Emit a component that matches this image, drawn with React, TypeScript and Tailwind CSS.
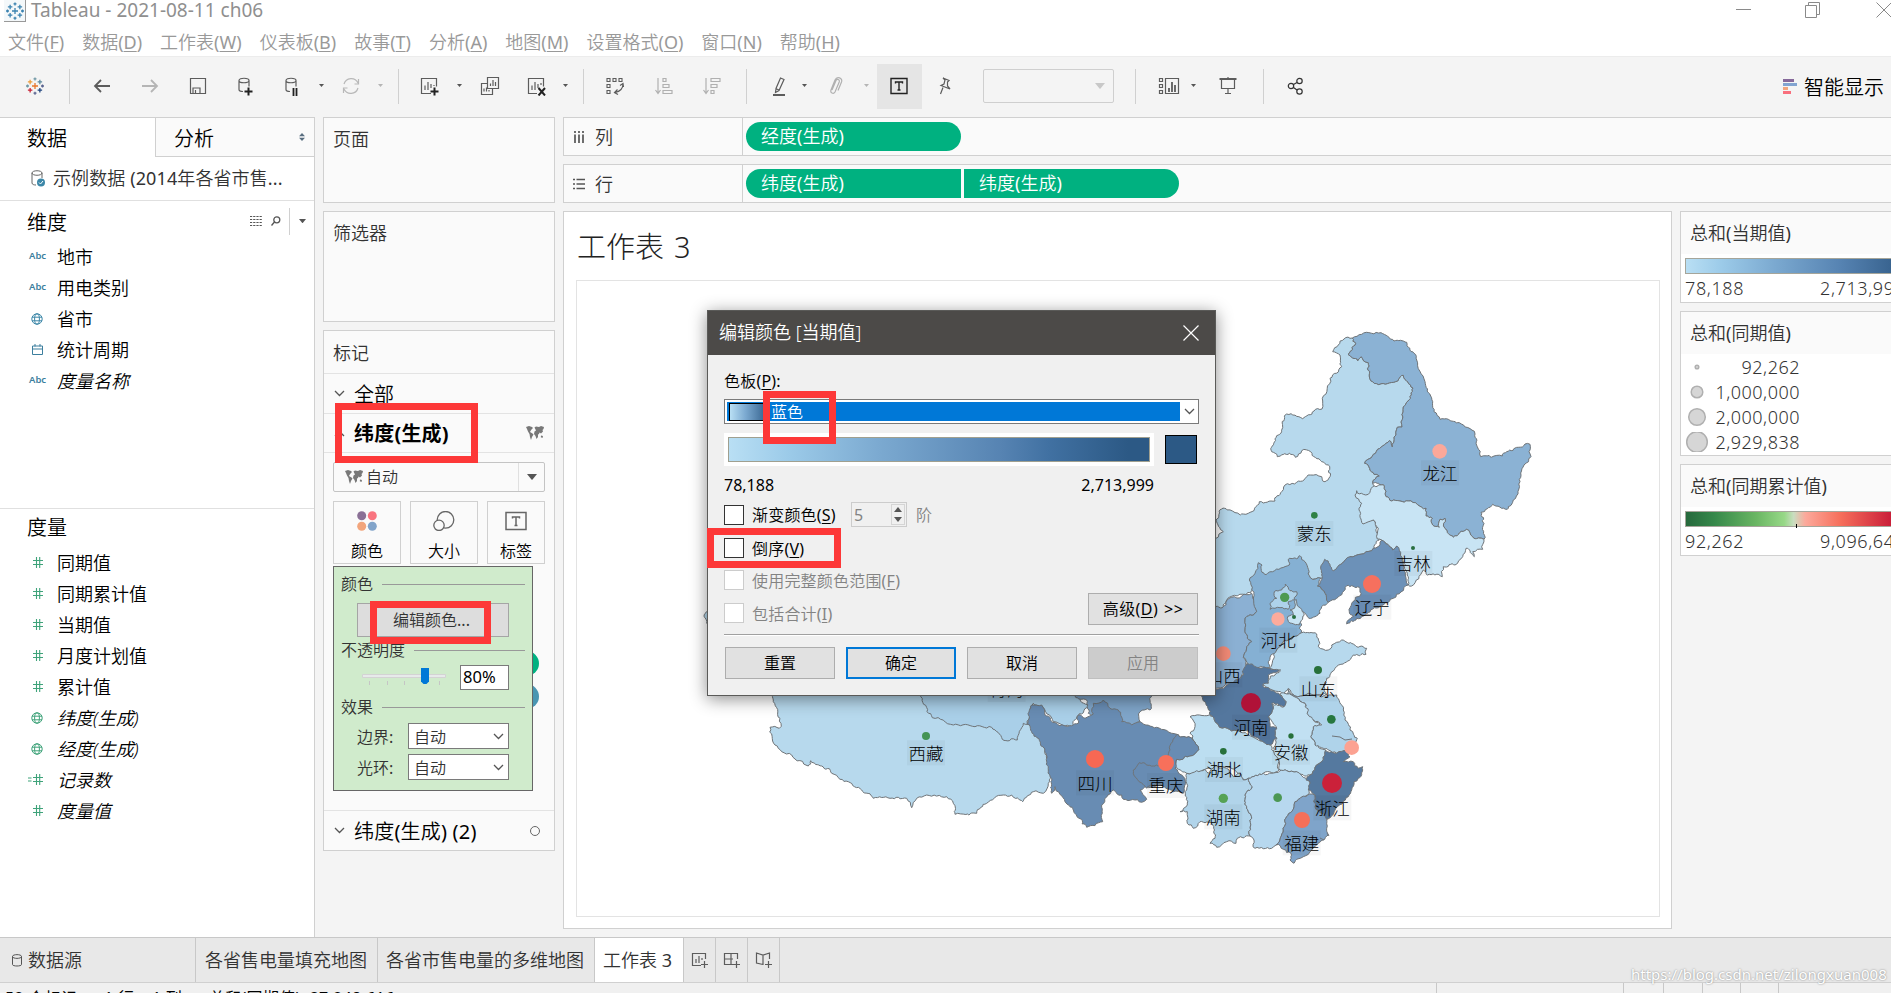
import React from "react";

type Pt = [number, number];
type Frame = "n" | "e" | "w";

const origin: Record<Frame, Pt> = { n: [1190, 310], e: [1180, 560], w: [740, 640] };

function parse(frame: Frame, s: string): Pt[] {
  const [ox, oy] = origin[frame];
  return s
    .trim()
    .split(/\s+/)
    .map((p) => {
      const [x, y] = p.split(",").map(Number);
      return [ox + x / 3, oy + y / 3] as Pt;
    });
}

function noise(x: number, y: number) {
  const v = Math.sin(x * 12.9898 + y * 78.233) * 43758.5453;
  return v - Math.floor(v) - 0.5;
}

// Splits a border segment at a displaced midpoint; the order of the ends does not matter.
function rough(a: Pt, b: Pt): Pt[] {
  const dx = b[0] - a[0];
  const dy = b[1] - a[1];
  const len = Math.hypot(dx, dy);
  if (len < 3 || len > 60) return [b];
  const mx = (a[0] + b[0]) / 2;
  const my = (a[1] + b[1]) / 2;
  const sign = a[0] + a[1] * 0.37 < b[0] + b[1] * 0.37 ? 1 : -1;
  const k = noise(Math.round(mx * 3), Math.round(my * 3)) * sign * Math.min(0.5, 3 / len);
  const m: Pt = [mx - dy * k, my + dx * k];
  return [...rough(a, m), ...rough(m, b)];
}

function outline(frame: Frame, s: string) {
  const pts = parse(frame, s);
  const out: Pt[] = [pts[0]];
  pts.forEach((p, i) => out.push(...rough(p, pts[(i + 1) % pts.length])));
  return "M" + out.map((p) => p[0].toFixed(1) + " " + p[1].toFixed(1)).join("L") + "Z";
}

const regions: { f: Frame; c: string; p: string }[] = [
  { f: "n", c: "#b7d9ed", p: "428,125 445,105 462,87 487,84 497,100 474,133 503,152 514,140 521,153 535,158 538,195 548,215 573,221 623,213 631,200 640,196 669,234 654,273 640,291 636,351 622,352 607,411 598,392 524,460 552,493 568,498 548,520 560,560 540,600 548,630 560,655 568,690 545,722 480,740 430,790 404,800 393,805 361,803 340,760 330,760 298,785 248,790 216,800 190,830 182,848 118,862 98,895 40,895 40,700 78,685 100,665 78,630 95,597 160,612 175,610 208,575 255,573 275,545 292,521 320,517 361,495 395,500 405,515 420,500 415,465 395,455 362,425 335,422 316,442 298,430 262,440 245,425 247,408 265,375 290,312 338,326 372,303 396,297 397,265 420,205 455,170 450,135" },
  { f: "n", c: "#8bb2d4", p: "487,84 515,73 573,68 612,93 650,97 672,130 680,150 705,215 722,258 732,305 750,328 775,328 808,338 855,372 862,410 872,440 937,438 950,425 985,412 1005,402 1020,403 1017,425 1023,440 1002,465 990,515 970,570 952,598 908,583 873,607 882,640 882,688 848,680 830,658 790,682 765,655 765,625 750,628 748,652 728,645 727,625 708,618 708,595 655,573 605,573 588,560 583,527 548,520 568,498 552,493 524,460 598,392 607,411 622,352 636,351 640,291 654,273 669,234 640,196 631,200 623,213 573,221 548,215 538,195 535,158 521,153 514,140 503,152 474,133 497,100" },
  { f: "n", c: "#c8e4f4", p: "583,527 588,560 605,573 655,573 708,595 708,618 727,625 728,645 748,652 750,628 765,625 765,655 790,682 830,658 848,680 882,688 878,718 848,725 853,740 828,715 818,740 795,765 760,770 757,800 712,795 700,780 665,828 655,825 650,785 620,708 608,720 575,690 562,687 565,655 550,630 519,642 507,600 515,580 495,555 500,542 520,553 535,553 548,530" },
  { f: "n", c: "#6c91b8", p: "575,690 608,720 620,708 640,765 655,825 610,865 580,885 500,925 470,942 475,930 490,920 478,905 485,880 513,850 508,832 470,827 440,865 415,877 405,850 382,828 397,800 397,762 404,748 430,782 480,740 545,722 570,705" },
  { f: "e", c: "#8bb0d3", p: "60,147 130,140 155,112 215,100 230,155 195,180 195,210 215,245 190,292 200,320 180,360 60,400" },
  { f: "e", c: "#85b0d3", p: "235,8 246,15 246,37 278,35 328,15 328,-5 360,-13 375,5 391,53 423,55 412,78 435,100 445,127 425,140 420,160 405,170 387,175 370,155 360,180 365,195 358,205 365,218 325,240 296,262 265,305 268,323 200,315 190,292 215,245 195,210 195,180 230,155 215,90 208,60 225,40" },
  { f: "e", c: "#aed2ea", p: "270,130 290,115 283,95 305,90 316,72 330,92 350,95 343,120 325,125 325,148 300,143 270,148" },
  { f: "e", c: "#c8e4f4", p: "348,118 355,140 372,160 358,195 335,190 322,175 340,165 330,150 345,140" },
  { f: "e", c: "#b7d9ed", p: "296,262 325,240 365,218 410,222 415,260 445,270 455,255 485,240 520,252 560,265 558,283 520,285 490,312 465,325 440,355 430,378 440,405 410,405 345,408 325,385 310,405 248,375 300,328 268,325" },
  { f: "e", c: "#afd3ea", p: "410,405 470,405 490,450 495,480 510,510 532,535 530,570 495,575 470,580 445,570 405,555 392,530 400,500 425,495 400,480 380,455 375,430 320,402 325,388 345,408" },
  { f: "e", c: "#c1e0f2", p: "300,403 320,402 375,430 385,465 400,480 420,492 400,500 392,530 405,555 437,570 430,600 405,622 390,645 350,635 320,632 300,630 295,595 280,580 290,535 290,505 265,470 280,445 275,432 312,440 318,425" },
  { f: "e", c: "#bcdef1", p: "30,470 88,465 115,495 170,512 235,540 275,560 290,590 298,630 250,640 205,655 190,660 180,640 140,620 100,625 75,628 50,640 20,640 -30,620 -20,590 55,570 40,540 30,520 45,500" },
  { f: "e", c: "#54779e", p: "200,312 268,325 297,330 265,345 265,370 248,375 280,392 300,405 318,425 312,440 298,435 275,430 280,445 265,470 270,500 290,505 290,535 270,555 235,535 210,520 170,512 115,495 90,465 75,425 65,408 110,388 160,368 190,345" },
  { f: "e", c: "#b1d4ea", p: "20,640 50,632 75,628 85,640 105,618 140,625 160,650 180,640 190,660 205,655 217,680 195,705 200,740 215,775 210,828 172,835 168,850 140,845 110,862 90,850 105,835 98,795 60,785 40,805 22,790 22,755 0,755 22,735 20,690" },
  { f: "e", c: "#b7d8ef", p: "205,655 250,640 300,632 320,632 350,635 378,655 390,665 388,700 345,725 335,755 320,770 310,810 288,855 275,865 225,865 222,840 210,828 215,775 200,740 195,705 217,680" },
  { f: "e", c: "#55799f", p: "437,570 470,580 500,572 510,590 490,605 520,605 535,625 548,620 535,655 522,665 515,690 505,710 465,750 440,778 425,760 405,740 405,705 385,690 390,665 378,660 390,645 405,622 430,600" },
  { f: "e", c: "#7fa4ca", p: "388,702 405,705 405,740 425,760 440,778 440,805 445,825 410,855 395,870 370,890 342,910 330,900 333,880 288,855 310,810 320,770 335,755 345,725" },
  { f: "w", c: "#b7d9ed", p: "130,120 100,165 100,185 120,235 118,265 90,262 105,315 125,335 155,345 205,378 212,362 245,378 275,400 300,418 325,425 365,450 400,475 450,475 500,475 515,503 530,475 560,465 620,470 640,490 645,523 710,520 740,490 790,465 815,465 848,485 880,455 910,460 925,430 935,390 908,320 905,290 862,253 880,190 540,100" },
  { f: "w", c: "#a9cfe8", p: "530,150 577,233 640,255 755,262 787,298 832,300 850,250 862,253 880,190 900,200 940,245 995,262 1010,230 1045,200 1010,170 1010,100 540,100" },
  { f: "w", c: "#7fa5c9", p: "1005,168 1040,180 1045,220 1095,255 1150,265 1200,245 1200,215 1230,210 1235,165 1235,100 1005,100" },
  { f: "w", c: "#688cb3", p: "862,253 868,230 875,195 905,195 915,225 950,250 995,257 1015,250 1015,225 1035,235 1060,222 1060,190 1090,180 1110,205 1135,210 1145,245 1175,255 1200,245 1250,262 1310,283 1345,290 1375,320 1370,335 1310,358 1300,420 1220,440 1200,450 1220,478 1205,487 1150,478 1145,465 1120,450 1085,495 1088,545 1040,562 1000,510 975,485 945,440 935,460 925,390 908,320" },
  { f: "w", c: "#688cb3", p: "1310,283 1345,290 1375,320 1370,335 1310,358 1305,385 1325,405 1337,430 1330,460 1300,455 1255,430 1220,445 1180,400 1198,368 1240,378 1275,370 1290,330" },
  { f: "w", c: "#b7d9ed", p: "-95,-88 -104,-80 -108,-70 -102,-62 -100,-50 -90,-50" },
];

const labels: [Frame, number, number, string][] = [
  ["n", 750, 490, "龙江"], ["n", 373, 672, "蒙东"], ["n", 670, 762, "吉林"], ["n", 547, 893, "辽宁"],
  ["e", 295, 242, "河北"], ["e", 130, 346, "山西"], ["e", 415, 388, "山东"], ["e", 213, 503, "河南"],
  ["e", 333, 578, "安徽"], ["e", 132, 630, "湖北"], ["e", 130, 772, "湖南"], ["e", 457, 745, "浙江"],
  ["e", 365, 850, "福建"], ["w", 558, 340, "西藏"], ["w", 1065, 430, "四川"], ["w", 1278, 438, "重庆"],
  ["w", 800, 150, "青海"],
];

const dots: [Frame, number, number, number, string][] = [
  ["n", 749, 424, 22, "#fba89a"], ["n", 373, 616, 10, "#2f8246"], ["n", 669, 714, 6, "#2a6f40"], ["n", 546, 822, 27, "#f6705e"],
  ["e", 314, 112, 14, "#4e9a51"], ["e", 294, 177, 20, "#fcab9c"], ["e", 342, 171, 6, "#2a6f40"], ["e", 130, 281, 22, "#f28a76"],
  ["e", 414, 330, 12, "#27703a"], ["e", 213, 429, 30, "#b01238"], ["e", 454, 478, 13, "#27773f"], ["e", 333, 528, 8, "#27703a"],
  ["e", 130, 574, 10, "#27703a"], ["e", 130, 715, 14, "#56a254"], ["e", 293, 713, 13, "#4c9753"], ["e", 515, 563, 22, "#fca292"],
  ["e", 456, 669, 30, "#cb213a"], ["e", 366, 780, 24, "#f6705a"], ["w", 558, 288, 12, "#449455"], ["w", 1065, 357, 27, "#f76853"],
  ["w", 1278, 369, 24, "#f7705b"],
];

function ChinaMap() {
  return (
    <svg className="block h-full w-full" viewBox="577 281 1082 635">
      {regions.map((r, i) => (
        <path key={i} d={outline(r.f, r.p)} fill={r.c} stroke="#6f7478" strokeWidth="1" strokeLinejoin="round" />
      ))}
      <path d="M1332 736L1340 737L1345 740L1352 739M1327 833l2 3M1320 838l4 2" fill="none" stroke="#6f7478" />
      {labels.map(([f, x, y], i) => (
        <rect key={i} x={origin[f][0] + x / 3 - 19} y={origin[f][1] + y / 3 - 13} width="38" height="25" fill="#000" opacity="0.035" />
      ))}
      {dots.map(([f, x, y, r, c], i) => (
        <circle key={i} cx={origin[f][0] + x / 3} cy={origin[f][1] + y / 3} r={r / 3} fill={c} />
      ))}
      {labels.map(([f, x, y, t], i) => (
        <text key={i} x={origin[f][0] + x / 3} y={origin[f][1] + y / 3 + 6.3} fontSize="17.5" textAnchor="middle" fill="#000" className="font-light">
          {t}
        </text>
      ))}
    </svg>
  );
}

const LogoMark = ({ mono, className }: { mono?: boolean; className: string }) => {
  const crosses: [number, number, number, string][] = [
    [12, 12, 4, "#e8762b"], [5.5, 6.5, 3, "#eb9d3c"], [18.5, 6.5, 3, "#5b879b"], [5.5, 17.5, 3, "#c72035"], [18.5, 17.5, 3, "#1f447e"],
    [12, 2.5, 2, "#7199a6"], [12, 21.5, 2, "#5b6591"], [2, 12, 2, "#7199a6"], [22, 12, 2, "#5b6591"],
  ];
  return (
    <svg viewBox="0 0 24 24" className={className} fill="none" strokeWidth="1.7">
      {crosses.map(([x, y, r, c], i) => (
        <path key={i} d={`M${x - r} ${y}h${2 * r}M${x} ${y - r}v${2 * r}`} stroke={mono ? "#3a82b0" : c} />
      ))}
    </svg>
  );
};

const Caret = ({ c = "#555", w = 5 }: { c?: string; w?: number }) => (
  <svg width={w} height={w * 0.62} viewBox="0 0 10 6" className="shrink-0"><path d="M0 0h10L5 6z" fill={c} /></svg>
);

const Chevron = ({ up }: { up?: boolean }) => (
  <svg width="11" height="7" viewBox="0 0 11 7" className="shrink-0" fill="none" stroke="#555" strokeWidth="1.3">
    <path d={up ? "M1 6l4.5-4.5L10 6" : "M1 1l4.5 4.5L10 1"} />
  </svg>
);

const MapGlyph = () => (
  <svg width="18" height="14" viewBox="0 0 18 14" className="shrink-0" fill="#787878">
    <path d="M0 1l3-1 3 1 1 1-1.500 1.500L4.500 5 4 6l2.500 1.500 1 1L6 11l-1 3-1-3-.5-3L2 5.500 1 3zM8.500 1.500l1.500-1 3 .5 2-1 3 1-.5 2-1 1 .5 1.500-2 2-1.500-1L13 8l-1 .5L12 11l-1.500 2-1-3-1.500-2 .5-2.500 1.500-1zM15 9.500l2 .5-.5 2-1.700-.7z" />
  </svg>
);

const Sep = ({ x }: { x: string }) => <div className={"h-[35px] w-px shrink-0 bg-[#d0d0d0] " + x} />;

function Tool({ w, children }: { w: string; children?: React.ReactNode }) {
  return <div className={"flex h-[45px] shrink-0 items-center justify-center " + w}>{children}</div>;
}

const S = ({ c = "#5c5c5c", children, w = 20, sw = 1.2 }: { c?: string; children: React.ReactNode; w?: number; sw?: number }) => (
  <svg width={w} height="20" viewBox={`0 0 ${w} 20`} fill="none" stroke={c} strokeWidth={sw} className="shrink-0">{children}</svg>
);

function Toolbar() {
  return (
    <div className="flex h-[61px] items-center border-t border-[#ececec] bg-[#f4f4f4] pb-[2px]">
      <Tool w="w-[69px]"><LogoMark className="h-[18px] w-[18px]" /></Tool>
      <Sep x="" />
      <Tool w="w-[64px]"><S sw={1.8}><path d="M18 10H3M9 4l-6 6 6 6" /></S></Tool>
      <Tool w="w-[32px]"><S c="#b5b5b5" sw={1.8}><path d="M2 10h15M11 4l6 6-6 6" /></S></Tool>
      <Tool w="w-[64px]"><S><path d="M2.500 2.500h15v15h-15zM5 17v-5h7v5M7.500 14v3" /></S></Tool>
      <Tool w="w-[30px]"><S><path d="M4 4.500v9c0 1.500 2 2 4 2M14 4.500v6M4 4.500C4 1.500 14 1.500 14 4.500S4 7.500 4 4.500" /><path d="M9.500 15.500h8M13.500 11.500v8" stroke="#222" strokeWidth="2" /></S></Tool>
      <Tool w="w-[64px]"><S><path d="M4 4.500v9c0 1.500 2 2 4 2M14 4.500v6M4 4.500C4 1.500 14 1.500 14 4.500S4 7.500 4 4.500" /><path d="M11.500 12v8M14.500 12v8" stroke="#222" strokeWidth="1.800" /></S></Tool>
      <div className="-ml-[5px]"><Caret /></div>
      <Tool w="w-[54px]"><S c="#b8b8b8" w={18}><path d="M2 8a7.500 7.500 0 0 1 14-1M16 12a7.500 7.500 0 0 1-14 1M16.500 3v5h-4M1.500 17v-5h4" /></S></Tool>
      <Caret c="#b5b5b5" />
      <Sep x="ml-[15px]" />
      <Tool w="w-[60px]"><S><path d="M12 17.500H2.500v-15h15v8M6 14V9.500M9 14V6M12 12V8M15 10v-1" /><path d="M11.500 15.500h8M15.500 11.500v8" stroke="#222" strokeWidth="2" /></S></Tool>
      <div className="-ml-[2px]"><Caret /></div>
      <Tool w="w-[56px]"><S><path d="M7.500 1.500h11v11h-11zM7 7.500H1.500v11h11V13M10.500 10V7.500M13 10V4M15.500 10V6M4 15.500v-3M6.500 15.500v-4M9 15.500V14" /></S></Tool>
      <Tool w="w-[36px]"><S><path d="M11 17.500H2.500v-15h15v8M6 14V9.500M9 14V6M12 12V8M15 9v-2" /><path d="M12.500 12l6.500 7.500M19 12l-6.500 7.500" stroke="#222" strokeWidth="2" /></S></Tool>
      <div className="ml-[9px]"><Caret /></div>
      <Sep x="ml-[15px]" />
      <Tool w="w-[61px]"><S><path d="M2 2.500h3v3H2zM8 2.500h3v3H8zM14 2.500h3v3h-3zM2 8.500h3v3H2zM2 14.500h3v3H2z" strokeWidth="1.100" /><path d="M18 8c0 5-3 7.500-8 8.500M18.500 11L18 7.500 15 9.500M12.500 13.500L9.500 16.500l3.500 2" /></S></Tool>
      <Tool w="w-[37px]"><S c="#b0b0b0"><path d="M4 2v15M1.500 14L4 17.500 6.500 14M9 2.500h3v3H9zM9 8.500h6v3H9zM9 14.500h9v3H9z" /></S></Tool>
      <Tool w="w-[59px]"><S c="#b0b0b0"><path d="M4 2v15M1.500 14L4 17.500 6.500 14M9 2.500h9v3H9zM9 8.500h6v3H9zM9 14.500h3v3H9z" /></S></Tool>
      <Sep x="ml-[5px]" />
      <Tool w="w-[64px]"><S><path d="M11.500 2l3.500 1.500-5 11-3.500 2 .5-4zM6.500 12.500l3.500 1.500" /><path d="M4 19h12" strokeWidth="2" /></S></Tool>
      <div className="-ml-[9px]"><Caret /></div>
      <Tool w="w-[57px]"><S c="#b0b0b0"><path d="M6 14l4-9.500c1-2 4-1 3.200 1.500L9 16c-1.500 2.500-5 1-4-2L9 4c2-4.500 8-2 6.500 2l-3.500 8.500" /></S></Tool>
      <Caret c="#b5b5b5" />
      <div className="ml-[8px] flex h-[45px] w-[45px] shrink-0 items-center justify-center bg-[#e5e5e5] pr-[2px]"><S c="#222" sw={1.4}><path d="M2 2.500h16v15H2zM6.500 7.500V6h7v1.500M10 6v8M8.500 14h3" /></S></div>
      <Tool w="w-[44px]"><S><path d="M9 2l6 2.500-1.500 1.500 0 4 2.500 3-9-3.500 3-1.500 1-4zM9 11.500L6.500 18" /></S></Tool>
      <div className="ml-[17px] flex h-[34px] w-[131px] shrink-0 items-center justify-end rounded-[2px] border border-[#cfcfcf] pr-[8px]"><Caret c="#c8c8c8" w={10} /></div>
      <Sep x="ml-[21px]" />
      <Tool w="w-[65px]"><S w={22}><path d="M7.500 2.500h13v15h-13zM1.500 2.500h3v3h-3zM1.500 8.500h3v3h-3zM1.500 14.500h3v3h-3z" strokeWidth="1.200" /><path d="M11 16v-4M14 16V6M17 16V9" strokeWidth="1.800" /></S></Tool>
      <div className="-ml-[10px]"><Caret /></div>
      <Tool w="w-[64px]"><S><path d="M1.500 3h17" strokeWidth="2" /><path d="M3.500 3v9.500h13V3M10 1v2M10 12.500v5M7 17.500h6" /></S></Tool>
      <Sep x="ml-[3px]" />
      <Tool w="w-[64px]"><S c="#333"><circle cx="5" cy="10" r="2.700" /><circle cx="13.500" cy="5" r="2.700" /><circle cx="13.500" cy="15.500" r="2.700" /><path d="M7.500 8.500l3.500-2M7.500 11.500l3.500 2.500" /></S></Tool>
      <div className="ml-auto flex items-center pr-[7px]">
        <div className="mr-[7px] flex w-[14px] flex-col gap-px">
          <div className="h-[3px] w-[11px] bg-[#86699a]" /><div className="h-[3px] w-[14px] bg-[#82a4d0]" /><div className="h-[3px] w-[5px] bg-[#f2a57c]" /><div className="h-[3px] w-[8px] bg-[#f96f7d]" />
        </div>
        <span className="pt-[3px] text-[20px] leading-[30px] text-black">智能显示</span>
      </div>
    </div>
  );
}

const K = ({ t, k }: { t: string; k: string }) => <span>{t}<span className="font-normal">(<span className="underline decoration-1 underline-offset-[2px]">{k}</span>)</span></span>;

const Globe = ({ c }: { c: string }) => (
  <svg width="12" height="12" viewBox="0 0 12 12" fill="none" stroke={c} strokeWidth="1"><circle cx="6" cy="6" r="5.200" /><ellipse cx="6" cy="6" rx="2.400" ry="5.200" /><path d="M1 4.200h10M1 7.800h10" /></svg>
);
const Hash = ({ eq }: { eq?: boolean }) => (
  <svg width="15" height="11" viewBox="0 0 15 11" fill="none" stroke="#3fa37a" strokeWidth="1.100" className="-ml-[4px]"><path d="M5 3.500h10M5 7.500h10M8.500 0v11M11.700 0v11" />{eq && <path d="M0 4h3.500M0 7h3.500" />}</svg>
);

function Field({ icon, t, it }: { icon: string; t: string; it?: boolean }) {
  return (
    <div className="flex h-[31px] items-center">
      <div className="flex w-[57px] shrink-0 items-center pl-[29px]">
        {icon === "abc" && <span className="text-[9.5px] font-semibold text-[#3c7f9e]">Abc</span>}
        {icon === "globe" && <div className="ml-[2px]"><Globe c="#3c87a8" /></div>}
        {icon === "gglobe" && <div className="ml-[2px]"><Globe c="#3fa37a" /></div>}
        {icon === "cal" && <svg className="ml-[3px]" width="11" height="11" viewBox="0 0 11 11" fill="none" stroke="#3c7f9e"><path d="M.5 2h10v8.500H.5zM.5 5h10M3 0v2.500M8 0v2.500" /></svg>}
        {icon === "hash" && <div className="ml-[3px]"><Hash /></div>}
        {icon === "ehash" && <div className="ml-[3px]"><Hash eq /></div>}
      </div>
      <span className={"text-[18px] leading-[26px] text-black " + (it ? "italic" : "")}>{t}</span>
    </div>
  );
}

function DataPane() {
  return (
    <div className="flex w-[315px] shrink-0 flex-col border-r border-t border-[#d0d0d0] bg-white">
      <div className="flex h-[39px]">
        <div className="flex w-[155px] items-center pl-[27px] pt-[3px] text-[20px] leading-[30px] text-black">数据</div>
        <div className="flex flex-1 items-center justify-between border-b border-l border-[#d0d0d0] bg-[#fafafa] pl-[18px] pr-[9px] text-[20px] leading-[30px] text-black">
          <span className="pt-[4px]">分析</span>
          <svg width="6" height="8" viewBox="0 0 6 8" fill="#596e80"><path d="M0 3.300h6L3 0zM0 4.700h6L3 8z" /></svg>
        </div>
      </div>
      <div className="flex h-[44px] items-center border-b border-[#e0e0e0] pl-[31px] text-[18px] text-[#333]">
        <svg width="14" height="17" viewBox="0 0 14 17" fill="none" stroke="#666" className="mr-[8px]"><path d="M1 3v10c0 1.500 2 2 4 2M11 3v5M1 3c0-3 10-3 10 0S1 6 1 3" /><circle cx="10" cy="12.500" r="4" fill="#3c87a8" stroke="none" /><path d="M8 12.500l1.500 1.500 2.500-3" stroke="#fff" /></svg>
        <span className="whitespace-nowrap tracking-[0.1px]">示例数据 <span className="font-normal">(2014</span>年各省市售<span className="font-normal">...</span></span>
      </div>
      <div className="flex h-[40px] items-center pl-[27px]">
        <span className="mr-auto pt-[3px] text-[20px] leading-[30px] text-black">维度</span>
        <svg width="12" height="10" viewBox="0 0 12 10" stroke="#555" strokeDasharray="2.200 1" className="mr-[9px]"><path d="M0 .5h12M0 3.500h12M0 6.500h12M0 9.500h12" /></svg>
        <svg width="10" height="10" viewBox="0 0 10 10" stroke="#555" strokeWidth="1.300" fill="none" className="mr-[8px]"><circle cx="5.800" cy="3.800" r="3" /><path d="M3.500 6L.5 9.500" /></svg>
        <div className="mr-[9px] h-[27px] w-px bg-[#d0d0d0]" />
        <div className="mr-[8px]"><Caret w={7} /></div>
      </div>
      <div className="h-[268px] border-b border-[#e0e0e0]">
        <Field icon="abc" t="地市" /><Field icon="abc" t="用电类别" /><Field icon="globe" t="省市" /><Field icon="cal" t="统计周期" /><Field icon="abc" t="度量名称" it />
      </div>
      <div className="flex h-[38px] items-center pl-[27px] text-[20px] leading-[30px] text-black">度量</div>
      <Field icon="hash" t="同期值" /><Field icon="hash" t="同期累计值" /><Field icon="hash" t="当期值" /><Field icon="hash" t="月度计划值" /><Field icon="hash" t="累计值" />
      <Field icon="gglobe" t="纬度(生成)" it /><Field icon="gglobe" t="经度(生成)" it /><Field icon="ehash" t="记录数" it /><Field icon="hash" t="度量值" it />
    </div>
  );
}

const Heading = ({ t, w }: { t: string; w: string }) => (
  <div className="flex h-[24px] items-center text-[16px] text-[#333]"><span className="shrink-0">{t}</span><div className={"ml-[9px] h-px bg-[#999] " + w} /></div>
);

const MiniSelect = ({ label }: { label: string }) => (
  <div className="flex h-[26px] items-center pl-[16px] text-[16px] leading-[24px] text-[#333]">
    <span className="w-[51px] pt-px">{label}<span className="font-normal">:</span></span>
    <div className="flex h-[26px] w-[101px] items-center justify-between border border-[#7a7a7a] bg-white pl-[5px] pr-[4px]"><span className="pt-px">自动</span><Chevron /></div>
  </div>
);

function ColorPopup() {
  return (
    <div className="absolute left-[9px] top-[235px] h-[225px] w-[200px] border border-[#666] bg-[#d0ebcc] pl-[7px]">
      <div className="pt-[5px]"><Heading t="颜色" w="w-[143px]" /></div>
      <div className="ml-[16px] mt-[7px] flex h-[34px] w-[152px] items-center justify-center border border-[#a5a5a5] bg-[#dddddd] pr-[3px] text-[16px] text-[#333]">编辑颜色<span className="font-normal">...</span></div>
      <div className="mt-[1px]"><Heading t="不透明度" w="w-[111px]" /></div>
      <div className="ml-[21px] mt-[2px] flex h-[26px] items-center">
        <svg width="84" height="20" viewBox="0 0 84 20"><path d="M.5 7.500h83v3H.5z" fill="#e7eaea" stroke="#d3d3d3" /><path d="M7.500 14v4M25.500 14v4M42.500 14v4M77.500 14v4" stroke="#c5c5c5" /><path d="M59 1h8v13.500l-2.500 2.500h-3L59 14.500z" fill="#0078d7" /></svg>
        <div className="ml-[14px] flex h-[25px] w-[49px] items-center border border-[#7a7a7a] bg-white pl-[2px] text-[16.5px] font-normal text-black">80%</div>
      </div>
      <div className="mt-[5px]"><Heading t="效果" w="w-[143px]" /></div>
      <div className="mt-[4px]"><MiniSelect label="边界" /></div>
      <div className="mt-[5px]"><MiniSelect label="光环" /></div>
      <div className="absolute left-[36px] top-[34px] h-[43px] w-[121px] border-[7px] border-[#fd3838]" />
    </div>
  );
}

const Card = ({ h, t }: { h: string; t: string }) => (
  <div className={"border border-[#d0d0d0] bg-[#fafafa] pl-[9px] pt-[7px] text-[18px] leading-[28px] text-[#333] " + h}>{t}</div>
);

const MarkBtn = ({ w, t, children }: { w: string; t: string; children: React.ReactNode }) => (
  <div className={"flex h-[63px] flex-col items-center border border-[#d0d0d0] bg-[#fafafa] pt-[9px] " + w}>
    {children}
    <span className="mt-[9px] text-[16px] leading-[22px] text-black">{t}</span>
  </div>
);

function Shelves() {
  return (
    <div className="ml-[8px] flex w-[232px] shrink-0 flex-col gap-[8px]">
      <Card h="h-[86px]" t="页面" />
      <Card h="h-[111px]" t="筛选器" />
      <div className="relative h-[521px] border border-[#d0d0d0] bg-[#fafafa]">
        <div className="flex h-[43px] items-center border-b border-[#e3e3e3] pl-[9px] pt-[3px] text-[18px] text-[#333]">标记</div>
        <div className="flex h-[40px] items-center gap-[9px] border-b border-[#e3e3e3] pl-[10px] text-[20px] leading-[30px] text-black"><Chevron /><span className="pt-[3px]">全部</span></div>
        <div className="flex h-[39px] items-center gap-[9px] border-b border-[#e3e3e3] pl-[10px] pr-[10px] text-[20px] font-bold leading-[30px] text-black"><Chevron up /><span className="mr-auto pt-[2px] tracking-[0.2px]">纬度(生成)</span><MapGlyph /></div>
        <div className="mx-[9px] mt-[9px] flex h-[30px] items-center rounded-[2px] border border-[#c4c4c4] pl-[11px] text-[16px] text-[#333]">
          <MapGlyph /><span className="ml-[3px] mr-auto">自动</span>
          <div className="flex h-full w-[26px] items-center justify-center border-l border-[#e0e0e0]"><Caret w={10} /></div>
        </div>
        <div className="mx-[9px] mt-[9px] flex justify-between">
          <MarkBtn w="w-[68px]" t="颜色"><svg width="20" height="20" viewBox="0 0 20 20"><circle cx="4.700" cy="4.700" r="4.500" fill="#8a7096" /><circle cx="15.300" cy="4.700" r="4.500" fill="#f9747f" /><circle cx="4.700" cy="15.300" r="4.500" fill="#f2a57c" /><circle cx="15.300" cy="15.300" r="4.500" fill="#82a4ca" /></svg></MarkBtn>
          <MarkBtn w="w-[68px]" t="大小"><svg width="22" height="20" viewBox="0 0 22 20" fill="#fafafa" stroke="#666" strokeWidth="1.300"><circle cx="12.500" cy="8.800" r="8.300" /><circle cx="6" cy="14.300" r="5.200" /></svg></MarkBtn>
          <MarkBtn w="w-[58px]" t="标签"><svg width="22" height="20" viewBox="0 0 22 20" fill="none" stroke="#666" strokeWidth="1.500"><path d="M1 1.500h20v17H1zM7.500 7.500V6h7v1.500M11 6v8.500M9.500 14.500h3" /></svg></MarkBtn>
        </div>
        <div className="absolute left-[190px] top-[320px] h-[25px] w-[25px] rounded-full bg-[#00b180]" />
        <div className="absolute left-[190px] top-[353px] h-[25px] w-[25px] rounded-full bg-[#4996b2]" />
        <ColorPopup />
        <div className="absolute left-[11px] top-[72px] h-[60px] w-[143px] border-[7px] border-[#fd3838]" />
        <div className="absolute inset-x-0 bottom-0 flex h-[40px] items-center gap-[9px] border-t border-[#e3e3e3] pl-[10px] pr-[14px] text-[20px] leading-[30px] text-black">
          <Chevron /><span className="mr-auto pt-[2px] tracking-[0.2px]">纬度<span className="font-normal">(</span>生成<span className="font-normal">) (2)</span></span><div className="h-[10px] w-[10px] rounded-full border border-[#666]" />
        </div>
      </div>
    </div>
  );
}

const Pill = ({ t, r }: { t: string; r: string }) => (
  <div className={"flex h-[29px] w-[215px] items-center bg-[#00b180] pl-[15px] text-[18px] text-white " + r}>{t}<span className="font-normal">(</span>生成<span className="font-normal">)</span></div>
);

function Shelf({ t, children, rows }: { t: string; rows?: boolean; children: React.ReactNode }) {
  return (
    <div className="flex h-[39px] items-center border border-r-0 border-[#d0d0d0] bg-[#fafafa]">
      <div className="flex h-full w-[179px] shrink-0 items-center border-r border-[#d0d0d0] pl-[9px] text-[18px] leading-[26px] text-[#333]">
        <svg width="12" height="12" viewBox="0 0 12 12" stroke="#555" strokeWidth="1.700" className="mr-[10px]">
          {rows ? <path d="M0 1.500h2M0 6h2M0 10.500h2M3.500 1.500H12M3.500 6H12M3.500 10.500H12" /> : <path d="M2 0v2M6 0v2M10 0v2M2 3.500V12M6 3.500V12M10 3.500V12" />}
        </svg>
        <span className="pt-px">{t}</span>
      </div>
      <div className="flex gap-[3px] pl-[3px]">{children}</div>
    </div>
  );
}

const LegendCard = ({ h, t, children }: { h: string; t: string; children: React.ReactNode }) => (
  <div className={"overflow-hidden border border-r-0 border-[#d0d0d0] bg-white " + h}>
    <div className="flex h-[42px] items-center bg-[#fafafa] pl-[9px] text-[18px] text-[#333]"><span className="pt-px">总和<span className="font-normal">(</span>{t}<span className="font-normal">)</span></span></div>
    {children}
  </div>
);

const LegendBar = ({ g, a, b }: { g: string; a: string; b: string }) => (
  <div className="w-[240px] pl-[4px] pt-[4px]">
    <div className={"h-[16px] border border-[#a5a59a] " + g} />
    <div className="flex h-[28px] items-center whitespace-nowrap text-[18px] tracking-[0.6px] text-[#333]"><span className="w-[135px]">{a}</span><span>{b}</span></div>
  </div>
);

function Legends() {
  const sizes: [number, string][] = [[5, "92,262"], [13, "1,000,000"], [18, "2,000,000"], [22, "2,929,838"]];
  return (
    <div className="ml-[8px] flex flex-1 flex-col gap-[8px]">
      <LegendCard h="h-[92px]" t="当期值"><LegendBar g="bg-[linear-gradient(90deg,#b9dff4,#9ccbe9_15%,#7ba9d0_38%,#5683b2_66%,#3a6591_87%,#2c5985)]" a="78,188" b="2,713,999" /></LegendCard>
      <LegendCard h="h-[145px]" t="同期值">
        <div className="flex flex-col">
          {sizes.map(([r, t]) => (
            <div key={t} className="flex h-[25px] items-center overflow-hidden text-[18px] tracking-[0.5px] text-[#333]">
              <div className="flex h-[20px] w-[32px] shrink-0 items-center justify-center overflow-hidden">
                <svg width="24" height="24" viewBox="0 0 24 24" className="shrink-0"><circle cx="12" cy="12" r={r / 2 - 0.7} fill="#d6d6d6" stroke="#b0b0b0" strokeWidth="1.500" /></svg>
              </div>
              <span className="w-[87px] pt-px text-right">{t}</span>
            </div>
          ))}
        </div>
      </LegendCard>
      <LegendCard h="h-[92px]" t="同期累计值">
        <div className="relative">
          <LegendBar g="bg-[linear-gradient(90deg,#26693c,#36884a_12%,#6ab663_30%,#97d887_42%,#c9ddc0_46%,#fca99b_51%,#f66f5b_66%,#cb213a_87%,#a80f36)]" a="92,262" b="9,096,645" />
          <div className="absolute left-[115px] top-[17px] h-[4px] w-px bg-black" />
        </div>
      </LegendCard>
    </div>
  );
}

const Check = ({ y, t, k, off }: { y: string; t: string; k: string; off?: boolean }) => (
  <div className={"flex items-center text-[16px] leading-[24px] " + y + (off ? " text-[#838383]" : " text-black")}>
    <div className={"mr-[8px] h-[20px] w-[20px] border bg-white " + (off ? "border-[#cccccc]" : "border-[#333]")} />
    <div className="pt-px tracking-[0.2px]"><K t={t} k={k} /></div>
  </div>
);

const Btn = ({ c, children }: { c: string; children: React.ReactNode }) => (
  <div className={"flex h-[32px] w-[110px] items-center justify-center text-[16px] " + c}>{children}</div>
);

function ColorDialog() {
  return (
    <div className="absolute left-[707px] top-[310px] h-[386px] w-[509px] border border-[#5a5a58] bg-[#f0f0f0] shadow-[0_3px_16px_rgba(0,0,0,0.45)]">
      <div className="flex h-[44px] items-center justify-between bg-[#4c4a48] pb-px pl-[11px] pr-[16px] text-[18px] text-white">
        <span>编辑颜色 [当期值]</span>
        <svg width="16" height="16" viewBox="0 0 16 16" stroke="#fff" strokeWidth="1.200"><path d="M.5.5l15 15M15.500.5l-15 15" /></svg>
      </div>
      <div className="px-[16px] pt-[14px] text-[16px]">
        <div className="h-[24px] leading-[24px] tracking-[0.2px] text-black"><K t="色板" k="P" /><span className="font-normal">:</span></div>
        <div className="mt-[6px] flex h-[25px] w-[475px] items-center justify-between border border-[#7a7a7a] bg-white pl-[2px] pr-[3px]">
          <div className="flex h-[19px] w-[453px] items-center bg-[#0078d7] pl-[2px] text-white">
            <div className="mr-px h-[18px] w-[41px] border border-black bg-[linear-gradient(90deg,#b9dff4,#7ba9d0_40%,#2c5985)]" />蓝色
          </div>
          <Chevron />
        </div>
        <div className="mt-[9px] flex items-center">
          <div className="h-[33px] w-[430px] bg-white p-[4px]"><div className="h-full border border-[#a0a090] bg-[linear-gradient(90deg,#b9dff4,#9ccbe9_14%,#7ba9d0_36%,#5683b2_65%,#4171a2_76%,#2c5985_95%)]" /></div>
          <div className="ml-[11px] h-[29px] w-[32px] border border-black bg-[#2c5985]" />
        </div>
        <div className="mt-[7px] flex h-[24px] w-[430px] items-center justify-between font-normal text-black"><span>78,188</span><span>2,713,999</span></div>
        <div className="mt-[5px] flex h-[25px] items-center text-[#838383]">
          <Check y="h-[25px] w-[127px]" t="渐变颜色" k="S" />
          <div className="flex h-[25px] w-[56px] items-center justify-between border border-[#cccccc] pl-[2px] pr-px font-normal">
            5
            <div className="flex h-[21px] w-[14px] flex-col items-center justify-between border border-[#d5d5d5] py-[2px]"><div className="rotate-180"><Caret w={8} /></div><Caret w={8} /></div>
          </div>
          <span className="ml-[9px]">阶</span>
        </div>
        <Check y="mt-[8px] h-[26px]" t="倒序" k="V" />
        <Check y="mt-[6px] h-[26px]" t="使用完整颜色范围" k="F" off />
        <div className="flex items-end justify-between">
          <Check y="mt-[6px] h-[26px]" t="包括合计" k="I" off />
          <Btn c="mb-px mr-px border border-[#adadad] bg-[#e1e1e1] tracking-[0.4px] text-black"><K t="高级" k="D" /><span className="ml-[6px] font-normal">&gt;&gt;</span></Btn>
        </div>
        <div className="mt-[8px] h-[2px] border-t border-[#a0a0a0] bg-white" />
        <div className="mt-[11px] flex gap-[11px] pl-px">
          <Btn c="border border-[#adadad] bg-[#e1e1e1] text-black">重置</Btn>
          <Btn c="border-2 border-[#0078d7] bg-[#e1e1e1] text-black">确定</Btn>
          <Btn c="border border-[#adadad] bg-[#e1e1e1] text-black">取消</Btn>
          <Btn c="border border-[#bfbfbf] bg-[#cccccc] text-[#838383]">应用</Btn>
        </div>
      </div>
      <div className="absolute left-[55px] top-[80px] h-[53px] w-[73px] border-[7px] border-[#fd3838]" />
      <div className="absolute left-[-1px] top-[217px] h-[40px] w-[134px] border-[7px] border-[#fd3838]" />
    </div>
  );
}

const BTab = ({ w, children }: { w: string; children: React.ReactNode }) => (
  <div className={"flex h-full shrink-0 items-center whitespace-nowrap border-r border-[#c8c8c8] " + w}>{children}</div>
);

export default function App() {
  return (
    <div className="relative flex h-[993px] w-[1891px] flex-col overflow-hidden bg-[#f4f4f4] font-['Noto_Sans','Noto_Sans_CJK_SC',sans-serif] font-[350]">
      <div className="flex h-[22px] items-center bg-white text-[#8f8f8f]">
        <div className="ml-[4px] flex h-[22px] w-[22px] items-center justify-center border-b border-r border-[#999] bg-[#f4f8fa]"><LogoMark mono className="h-[18px] w-[18px]" /></div>
        <span className="-mt-[2px] ml-[5px] text-[19px] font-normal leading-[22px]">Tableau - 2021-08-11 ch06</span>
        <svg width="155" height="16" viewBox="0 0 155 16" fill="none" stroke="#8a8a8a" className="-mt-[2px] ml-auto"><path d="M0 7.500h15M69.500 3.500h11v12h-11zM72.500 3V.5h11v12H81M140.500.5l15 15M155.500.5l-15 15" /></svg>
      </div>
      <div className="flex h-[34px] items-center gap-[18px] whitespace-nowrap bg-white pb-px pl-[8px] pt-[8px] text-[18px] text-[#999]">
        <K t="文件" k="F" /><K t="数据" k="D" /><K t="工作表" k="W" /><K t="仪表板" k="B" /><K t="故事" k="T" /><K t="分析" k="A" /><K t="地图" k="M" /><K t="设置格式" k="O" /><K t="窗口" k="N" /><K t="帮助" k="H" />
      </div>
      <Toolbar />
      <div className="flex h-[820px] shrink-0">
        <DataPane />
        <Shelves />
        <div className="ml-[8px] flex min-w-0 flex-1 flex-col gap-[8px]">
          <Shelf t="列"><Pill t="经度" r="rounded-[15px]" /></Shelf>
          <Shelf t="行" rows><Pill t="纬度" r="rounded-l-[15px]" /><Pill t="纬度" r="rounded-r-[15px]" /></Shelf>
          <div className="flex">
            <div className="h-[718px] w-[1109px] shrink-0 border border-[#d0d0d0] bg-white pl-[12px]">
              <div className="flex h-[68px] items-center pl-px pt-[2px] text-[29px] font-light text-[#222]">工作表<span className="ml-[10px]">3</span></div>
              <div className="h-[637px] w-[1084px] border border-[#e3e3e3]"><ChinaMap /></div>
            </div>
            <Legends />
          </div>
        </div>
      </div>
      <div className="flex h-[45px] shrink-0 border-t border-[#c8c8c8] bg-[#e8e8e8] text-[18px] text-[#333]">
        <BTab w="w-[196px] pl-[12px]"><svg width="10" height="13" viewBox="0 0 10 13" fill="none" stroke="#555" className="mr-[6px]"><path d="M.5 2.500v8c0 2 9 2 9 0v-8c0-2.500-9-2.500-9 0s9 2.500 9 0" /></svg>数据源</BTab>
        <BTab w="w-[182px] pl-[9px]">各省售电量填充地图</BTab>
        <BTab w="w-[217px] pl-[8px]">各省市售电量的多维地图</BTab>
        <BTab w="w-[89px] bg-white pl-[8px]">工作表&nbsp;<span className="font-normal">3</span></BTab>
        <BTab w="w-[32px] justify-center"><S w={18}><path d="M10 15.500H1.500v-12h13V9M5 13V9M8 13V6M11 10V8M10 14.500h7M13.500 11v7" /></S></BTab>
        <BTab w="w-[32px] justify-center"><S w={18}><path d="M10 14.500H1.500v-11h13V9M1.500 9H10M8 3.500v11M10 14.500h7M13.500 11v7" /></S></BTab>
        <BTab w="w-[32px] justify-center"><S w={18}><path d="M8 14.500L1.500 13V3L8 5l6.500-2v6M8 5v10M10 14.500h7M13.500 11v7" /></S></BTab>
      </div>
      <div className="flex h-[11px] shrink-0 justify-between overflow-hidden border-t border-[#d0d0d0] bg-[#f0f0f0] pl-[5px] text-[16px] text-black">
        <span className="mt-[5px] whitespace-pre font-normal leading-[20px] tracking-[0.3px]">52 个标记      1 行 x 1 列      总和(同期值): 37,248,616</span>
        <div className="flex h-full w-[455px]">
          <div className="w-[187px] border-l border-[#c8c8c8]" /><div className="w-[40px] border-l border-[#c8c8c8]" /><div className="w-[39px] border-l border-[#c8c8c8]" /><div className="w-[38px] border-l border-[#c8c8c8]" /><div className="w-[38px] border-l border-[#c8c8c8]" /><div className="flex-1 border-l border-[#c8c8c8]" />
        </div>
      </div>
      <div className="absolute left-[1631px] top-[963px] whitespace-nowrap text-[15px] font-normal leading-[22px] text-white [text-shadow:0_0_2px_#777]">https://blog.csdn.net/zilongxuan008</div>
      <ColorDialog />
    </div>
  );
}
